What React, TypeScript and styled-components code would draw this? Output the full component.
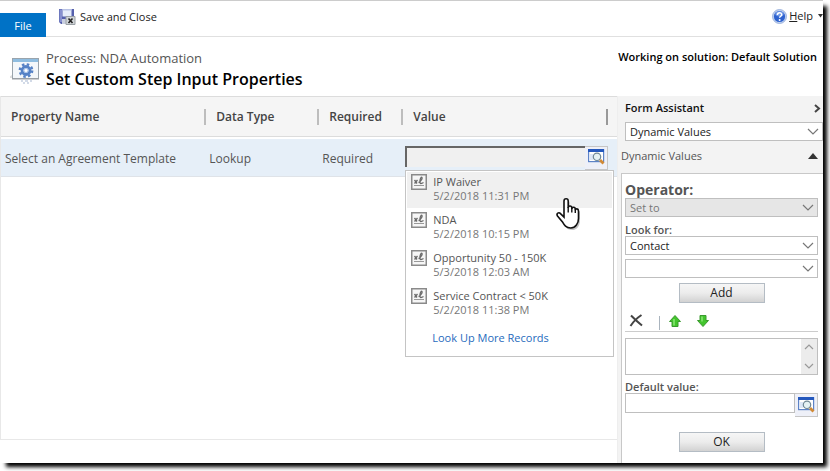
import React, { useState } from "react";
import styled, { createGlobalStyle, css } from "styled-components";

const Global = createGlobalStyle`
  *, *::before, *::after { box-sizing: border-box; }
  body {
    margin: 0;
    background: #fff;
    color: #444;
    font: 12px/16px "Open Sans", "Noto Sans", sans-serif;
  }
  button, input, select { font: inherit; color: inherit; margin: 0; border-radius: 0; }
`;

const Page = styled.div`
  min-height: 100vh;
  padding: 0 7px 8px 0;
  display: flex;
  overflow: hidden;
`;

const Dialog = styled.main`
  flex: 1;
  min-width: 0;
  display: flex;
  flex-direction: column;
  background: #fff;
  border-top: 1px solid #ccc;
  box-shadow: 5px 5px 4px -1px #000;
`;

const Toolbar = styled.div`
  display: flex;
  align-items: flex-start;
  height: 36px;
`;

const FileTab = styled.button`
  align-self: flex-end;
  width: 46px;
  height: 24px;
  padding: 2px 0 0;
  border: 0;
  background: #0072c6;
  color: #fff;
  font-size: 11px;
`;

const ToolbarBody = styled.div`
  flex: 1;
  align-self: stretch;
  display: flex;
  justify-content: space-between;
  align-items: flex-start;
  padding: 7px 0 0 12px;
  border-bottom: 1px solid #e0e0e0;
`;

const ToolButton = styled.button<{ $gap: number }>`
  display: flex;
  align-items: center;
  gap: ${(p) => p.$gap}px;
  padding: 0;
  border: 0;
  background: none;
  font-size: 11px;
  color: #222;
`;

const Header = styled.header`
  display: flex;
  align-items: flex-start;
  height: 59px;
  padding: 12px 6px 0 10px;
`;

const HeaderIcon = styled.svg`
  margin: 8px 6px 0 0;
  flex: none;
`;

const Heading = styled.div`
  flex: 1;
  white-space: nowrap;
`;

const Process = styled.div`
  font-size: 13px;
  line-height: 18px;
  color: #555;
`;

const Title = styled.h1`
  margin: 1px 0 0;
  font-size: 16px;
  line-height: 22px;
  font-weight: 600;
  color: #000;
`;

const Solution = styled.strong`
  font-size: 11px;
  line-height: 16px;
  font-weight: 600;
  color: #000;
  white-space: nowrap;
`;

const Content = styled.div`
  flex: 1;
  display: flex;
`;

const GridPane = styled.section`
  flex: 1;
  min-width: 0;
  margin-bottom: 23px;
  border: solid #e8e8e8;
  border-width: 0 0 1px 1px;
`;

const Table = styled.table`
  width: 100%;
  table-layout: fixed;
  border-collapse: separate;
  border-spacing: 0;
`;

const Col = styled.col<{ $w: string }>`
  width: ${(p) => p.$w};
`;

const Th = styled.th`
  height: 41px;
  padding: 1px 0 0;
  text-align: left;
  background: #f5f5f5;
  border: solid #dcdcdc;
  border-width: 1px 0;
  font-size: 12px;
  font-weight: 600;
  color: #444;
`;

const ThInner = styled.div<{ $first?: boolean; $last?: boolean }>`
  display: flex;
  align-items: center;
  height: 16px;
  padding-left: 10px;
  margin-right: ${(p) => (p.$last ? 9 : 0)}px;
  border-left: ${(p) => (p.$first ? "0" : "2px solid #bdbdbd")};
  border-right: ${(p) => (p.$last ? "2px solid #999" : "0")};
`;

const Spacer = styled.tr`
  height: 2px;
`;

const Td = styled.td<{ $pad?: string }>`
  height: 38px;
  padding: ${(p) => p.$pad ?? "2px 0 0 5px"};
  background: #e6eff8;
  border-bottom: 1px solid #dfe3e8;
  color: #555;
  white-space: nowrap;
`;

const Lookup = styled.div`
  position: relative;
  display: flex;
  align-items: flex-start;
`;

const LookupInput = styled.input<{ $active?: boolean }>`
  flex: 1;
  min-width: 0;
  height: ${(p) => (p.$active ? 21 : 20)}px;
  padding: 0 4px;
  outline: 0;
  ${(p) =>
    p.$active
      ? css`
          background: #f0f0f0;
          border: solid #666;
          border-width: 2px 0 0 2px;
        `
      : css`
          background: #fff;
          border: 1px solid #bfbfbf;
        `}
`;

const LookupButton = styled.button`
  width: 23px;
  height: 24px;
  padding: 0 0 2px;
  display: grid;
  place-items: center;
  border: solid #c6c6c6;
  border-width: 1px 1px 1px 0;
  background: #eef0f8;
`;

const Popup = styled.div`
  position: absolute;
  z-index: 1;
  top: 24px;
  left: 0;
  width: 209px;
  height: 187px;
  padding: 1px;
  background: #fff;
  border: 1px solid #c4c4c4;
`;

const Options = styled.ul`
  list-style: none;
  margin: 0;
  padding: 0;
  display: grid;
  gap: 2px;
`;

const Option = styled.button<{ $active: boolean }>`
  display: flex;
  align-items: flex-start;
  gap: 6px;
  width: 100%;
  height: 36px;
  padding: 2px 4px;
  border: 0;
  text-align: left;
  font-size: 11px;
  line-height: 14px;
  color: #555;
  background: ${(p) => (p.$active ? "#f0f0f0" : "transparent")};
`;

const OptionText = styled.span`
  display: grid;
  padding-top: 1px;
`;

const OptionDate = styled.span`
  color: #777;
`;

const MoreLink = styled.a`
  display: block;
  margin: 8px 0 0 25px;
  font-size: 11px;
  color: #1f6bbd;
  text-decoration: none;
`;

const Pointer = styled.svg`
  position: absolute;
  z-index: 2;
  left: 150px;
  top: 51px;
  pointer-events: none;
`;

const Assistant = styled.aside`
  width: 206px;
  display: flex;
  flex-direction: column;
  padding-left: 3px;
  background: #f3f3f3;
  border-left: 1px solid #eee;
`;

const AssistantTitle = styled.div`
  display: flex;
  justify-content: space-between;
  align-items: center;
  height: 26px;
  padding: 0 2px 2px 4px;
  font-size: 11px;
  font-weight: 600;
  color: #111;
`;

const AssistantSelect = styled.div`
  padding-left: 4px;
`;

const SectionButton = styled.button`
  display: flex;
  justify-content: space-between;
  align-items: center;
  height: 32px;
  padding: 0 5px 2px 0;
  border: 0;
  background: none;
  font-size: 11px;
  color: #555;
`;

const Form = styled.form`
  flex: 1;
  display: flex;
  flex-direction: column;
  padding: 8px 5px 0 3px;
  background: #fff;
  border: solid #c8c8c8;
  border-width: 1px 0 0 1px;
`;

const Label = styled.label<{ $large?: boolean }>`
  font-weight: ${(p) => (p.$large ? 700 : 600)};
  color: #555;
  font-size: ${(p) => (p.$large ? 14 : 11)}px;
  line-height: ${(p) => (p.$large ? 16 : 12)}px;
`;

const SelectBox = styled.div`
  position: relative;
  height: 19px;
`;

const Select = styled.select`
  appearance: none;
  width: 100%;
  height: 19px;
  padding: 0 20px 0 4px;
  border: 1px solid #bfbfbf;
  background: #fff;
  color: #222;
  font-size: 11px;
  opacity: 1;
  &:disabled {
    background: #e6e6e6;
    color: #777;
  }
`;

const SelectArrow = styled.svg`
  position: absolute;
  right: 4px;
  top: 6px;
  pointer-events: none;
`;

const Stack = styled.div<{ $top: number }>`
  display: flex;
  flex-direction: column;
  margin-top: ${(p) => p.$top}px;
`;

const PushButton = styled.button<{ $top: number }>`
  align-self: center;
  width: 86px;
  height: 20px;
  margin-top: ${(p) => p.$top}px;
  padding: 0;
  border: 1px solid #b4bcc4;
  background: linear-gradient(#f6f6f6, #ececec 50%, #d2d2d2);
  color: #222;
  font-size: 12px;
  line-height: 16px;
`;

const Actions = styled.div`
  display: flex;
  align-items: flex-end;
  height: 29px;
  padding: 0 0 4px 4px;
  border-bottom: 1px solid #ccc;
`;

const ActionButton = styled.button<{ $left: number }>`
  display: block;
  margin-left: ${(p) => p.$left}px;
  padding: 0;
  border: 0;
  background: none;
  line-height: 0;
`;

const Divider = styled.span`
  width: 1px;
  height: 14px;
  margin: 0 0 -3px 16px;
  background: #aab4be;
`;

const ListBox = styled.div`
  display: flex;
  justify-content: flex-end;
  height: 37px;
  margin-top: 6px;
  border: 1px solid #bfbfbf;
`;

const Scroll = styled.div`
  width: 16px;
  display: flex;
  flex-direction: column;
  justify-content: space-between;
  align-items: center;
  padding: 5px 0;
  background: #ececec;
`;

const SaveIcon = () => (
  <svg width="18" height="18" viewBox="0 0 18 18" aria-hidden="true">
    <path d="M1 1h15v15H3l-2-2z" fill="#5560ad" />
    <path d="M1.500 1.500h2.500v12.500h-2.500z" fill="#8790cf" />
    <path d="M4.500 1h9v7.500h-9z" fill="#e6edfa" />
    <path d="M4.500 1h9v1.500h-9z" fill="#b8c2e4" />
    <path d="M4 11h6v5H4z" fill="#c9cfdf" />
    <path d="M8 8.500h9v8h-9z" fill="#d0d4d7" stroke="#9aa0a5" />
    <path d="M10.500 10.500l4 4.500m0-4.500l-4 4.500" stroke="#222" strokeWidth="1.600" />
  </svg>
);

const HelpIcon = () => (
  <svg width="15" height="15" viewBox="0 0 15 15" aria-hidden="true">
    <circle cx="7.5" cy="7.5" r="7" fill="#c2d2ef" stroke="#8ea8d8" strokeWidth="0.8" />
    <circle cx="7.5" cy="7.5" r="5.6" fill="#2d62cf" />
    <ellipse cx="7.5" cy="4.8" rx="4.2" ry="2.6" fill="#7199e6" />
    <path d="M5.4 6c0-3 4.4-2.900 4.300-.3 0 1.600-2.100 1.500-2.100 3.100" fill="none" stroke="#fff" strokeWidth="1.500" />
    <circle cx="7.600" cy="10.900" r="1" fill="#fff" />
  </svg>
);

const ProcessIcon = () => (
  <HeaderIcon width="30" height="28" viewBox="0 0 30 28" aria-hidden="true">
    <path d="M-3 21l5-3v3z" fill="#ddd" />
    <rect x="2.500" y="1.500" width="26" height="20" fill="#f4f7fa" stroke="#9aa4ac" />
    <path d="M3 2h25v3H3z" fill="#8fbde0" />
    <path d="M2 21h27v1.500H2z" fill="#9a9fa4" />
    <g transform="translate(16 13.500)">
      <circle r="6.200" fill="none" stroke="#5682c6" strokeWidth="2.400" strokeDasharray="2.500 2.370" />
      <circle r="4" fill="#dfeaf8" stroke="#5682c6" strokeWidth="2.800" />
      <circle r="2" fill="#fff" stroke="#a9c3e8" strokeWidth="1" />
    </g>
    <path d="M11 24h2m2 0h3m2 0h2M13 26h2m2 0h2" stroke="#c3cedf" strokeWidth="1.500" />
  </HeaderIcon>
);

const LookupIcon = () => (
  <svg width="17" height="17" viewBox="0 0 17 17" aria-hidden="true">
    <rect x="0.600" y="1.600" width="15" height="12" fill="#fff" stroke="#5d83c7" strokeWidth="1.200" />
    <path d="M0 1h16v3H0z" fill="#2458bd" />
    <path d="M2 6h3v6H2z" fill="#dce7f7" />
    <path d="M12 12l3.500 3.500" stroke="#d18a35" strokeWidth="2.800" />
    <circle cx="9" cy="8.800" r="3.700" fill="#e4f1f3" stroke="#6f8795" strokeWidth="1.200" />
  </svg>
);

const RecordIcon = () => (
  <svg width="16" height="16" viewBox="0 0 16 16" aria-hidden="true">
    <rect x="0.750" y="0.750" width="14.500" height="14.500" fill="#f6f6f6" stroke="#8a8a8a" strokeWidth="1.500" />
    <path d="M3.500 6l2.500 3.500M6.500 6l-3 3.500M7.500 8.500c2-.5 4.500-4.500 3.300-5.200C9.300 2.800 8 9.300 9.700 9.500c1 0 1.800-.5 2.800-1" fill="none" stroke="#6a6a6a" strokeWidth="1.300" />
    <path d="M3 11.500h10" stroke="#999" />
  </svg>
);

const Chevron = ({ up = false }: { up?: boolean }) => (
  <svg width="10" height="6" viewBox="0 0 10 6" aria-hidden="true">
    <path d={up ? "M1 5l4-4 4 4" : "M1 1l4 4 4-4"} fill="none" stroke="#999" strokeWidth="1.200" />
  </svg>
);

const ArrowIcon = ({ down = false }: { down?: boolean }) => (
  <svg width="12" height="12" viewBox="0 0 12 12" aria-hidden="true">
    <path
      d={down ? "M3 .5h6v5h2.500L6 11.500.5 5.500H3z" : "M6 .5l5.500 6H9v5H3v-5H.5z"}
      fill="#43c52d"
      stroke="#3a9a2e"
    />
    <path d={down ? "M5 1.500v5" : "M5 4v6.500"} stroke="#8ae676" strokeWidth="1.500" />
  </svg>
);

const handShape =
  "M9 4c0-3 4.200-3 4.200 0v7c0-2.600 3.600-2.600 3.600 0v1c0-2.400 3.500-2.300 3.500.2v1c0-2 3.200-1.800 3.200.7v7.500c0 5-3 9.600-7.700 9.600-5 0-6.600-3-8.300-6L2.500 19c-1.600-2.800 1.400-4.200 3-2.400L9 20z";

const HandPointer = () => (
  <Pointer width="28" height="36" viewBox="0 0 28 36" aria-hidden="true">
    <path d={handShape} fill="#555" opacity="0.350" transform="translate(1.500 2)" />
    <path d={handShape} fill="#fff" stroke="#111" strokeWidth="1.600" />
    <path d="M13.200 10v5.500m3.600-4.500v4.500m3.500-3v3.500" stroke="#111" strokeWidth="1.400" />
  </Pointer>
);

function Dropdown({ id, value, disabled, label }: { id: string; value: string; disabled?: boolean; label?: string }) {
  return (
    <SelectBox>
      <Select id={id} defaultValue={value} disabled={disabled} aria-label={label}>
        <option>{value}</option>
      </Select>
      <SelectArrow width="12" height="7" viewBox="0 0 12 7" aria-hidden="true">
        <path d="M1 1l5 5 5-5" fill="none" stroke="#777" strokeWidth="1.200" />
      </SelectArrow>
    </SelectBox>
  );
}

const records = [
  ["IP Waiver", "5/2/2018 11:31 PM"],
  ["NDA", "5/2/2018 10:15 PM"],
  ["Opportunity 50 - 150K", "5/3/2018 12:03 AM"],
  ["Service Contract < 50K", "5/2/2018 11:38 PM"],
];

export default function App() {
  const [template, setTemplate] = useState("");
  const [fallback, setFallback] = useState("");
  return (
    <>
      <Global />
      <Page>
        <Dialog>
          <Toolbar>
            <FileTab>File</FileTab>
            <ToolbarBody>
              <ToolButton $gap={4}>
                <SaveIcon />
                Save and Close
              </ToolButton>
              <ToolButton $gap={2}>
                <HelpIcon />
                <span>
                  <u>H</u>elp
                </span>
                <svg width="8" height="4" viewBox="0 0 8 4" aria-hidden="true">
                  <path d="M3 0h5L5.500 3.500z" fill="#333" />
                </svg>
              </ToolButton>
            </ToolbarBody>
          </Toolbar>
          <Header>
            <ProcessIcon />
            <Heading>
              <Process>Process: NDA Automation</Process>
              <Title>Set Custom Step Input Properties</Title>
            </Heading>
            <Solution>Working on solution: Default Solution</Solution>
          </Header>
          <Content>
            <GridPane>
              <Table>
                <colgroup>
                  <Col $w="33%" />
                  <Col $w="113px" />
                  <Col $w="84px" />
                  <Col $w="auto" />
                </colgroup>
                <thead>
                  <tr>
                    <Th><ThInner $first>Property Name</ThInner></Th>
                    <Th><ThInner>Data Type</ThInner></Th>
                    <Th><ThInner>Required</ThInner></Th>
                    <Th><ThInner $last>Value</ThInner></Th>
                  </tr>
                </thead>
                <tbody>
                  <Spacer />
                  <tr>
                    <Td $pad="2px 0 0 4px">
                      <label htmlFor="template">Select an Agreement Template</label>
                    </Td>
                    <Td>Lookup</Td>
                    <Td>Required</Td>
                    <Td $pad="0 9px 0 4px">
                      <Lookup>
                        <LookupInput
                          id="template"
                          $active
                          value={template}
                          onChange={(e) => setTemplate(e.target.value)}
                        />
                        <LookupButton aria-label="Look up a template">
                          <LookupIcon />
                        </LookupButton>
                        <Popup>
                          <Options>
                            {records.map(([name, date], i) => (
                              <li key={name}>
                                <Option $active={i === 0} onClick={() => setTemplate(name)}>
                                  <RecordIcon />
                                  <OptionText>
                                    <span>{name}</span>
                                    <OptionDate>{date}</OptionDate>
                                  </OptionText>
                                </Option>
                              </li>
                            ))}
                          </Options>
                          <MoreLink href="#records">Look Up More Records</MoreLink>
                        </Popup>
                        <HandPointer />
                      </Lookup>
                    </Td>
                  </tr>
                </tbody>
              </Table>
            </GridPane>
            <Assistant>
              <AssistantTitle>
                Form Assistant
                <svg width="7" height="9" viewBox="0 0 7 9" aria-hidden="true">
                  <path d="M1 1l4 3.500L1 8" fill="none" stroke="#444" strokeWidth="2" />
                </svg>
              </AssistantTitle>
              <AssistantSelect>
                <Dropdown id="mode" value="Dynamic Values" label="Form Assistant" />
              </AssistantSelect>
              <SectionButton>
                Dynamic Values
                <svg width="10" height="6" viewBox="0 0 10 6" aria-hidden="true">
                  <path d="M5 0l5 6H0z" fill="#333" />
                </svg>
              </SectionButton>
              <Form onSubmit={(e) => e.preventDefault()}>
                <Label htmlFor="operator" $large>Operator:</Label>
                <Dropdown id="operator" value="Set to" disabled />
                <Stack $top={7}>
                  <Label htmlFor="entity">Look for:</Label>
                  <Dropdown id="entity" value="Contact" />
                </Stack>
                <Stack $top={4}>
                  <Dropdown id="field" value="" label="Field" />
                </Stack>
                <PushButton type="button" $top={5}>Add</PushButton>
                <Actions>
                  <ActionButton type="button" $left={0} aria-label="Remove">
                    <svg width="14" height="13" viewBox="0 0 14 13" aria-hidden="true">
                      <path d="M2 1.500c3 3 6 6 11 10M12.500 1C8 4 4 8 1.500 12" fill="none" stroke="#444" strokeWidth="2" />
                    </svg>
                  </ActionButton>
                  <Divider />
                  <ActionButton type="button" $left={9} aria-label="Move up">
                    <ArrowIcon />
                  </ActionButton>
                  <ActionButton type="button" $left={16} aria-label="Move down">
                    <ArrowIcon down />
                  </ActionButton>
                </Actions>
                <ListBox>
                  <Scroll>
                    <Chevron up />
                    <Chevron />
                  </Scroll>
                </ListBox>
                <Stack $top={6}>
                  <Label htmlFor="fallback">Default value:</Label>
                  <Lookup>
                    <LookupInput id="fallback" value={fallback} onChange={(e) => setFallback(e.target.value)} />
                    <LookupButton type="button" aria-label="Look up a default value">
                      <LookupIcon />
                    </LookupButton>
                  </Lookup>
                </Stack>
                <PushButton $top={15}>OK</PushButton>
              </Form>
            </Assistant>
          </Content>
        </Dialog>
      </Page>
    </>
  );
}
